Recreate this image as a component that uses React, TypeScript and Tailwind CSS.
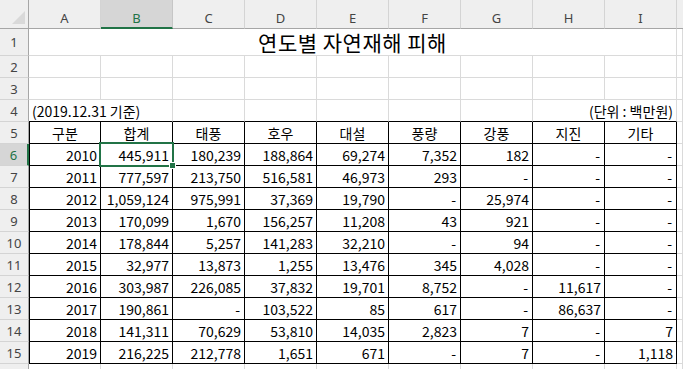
import React from "react";

const COLS = ["A", "B", "C", "D", "E", "F", "G", "H", "I"];
const HEAD = ["구분", "합계", "태풍", "호우", "대설", "풍량", "강풍", "지진", "기타"];
const DATA: string[][] = [
  ["2010", "445,911", "180,239", "188,864", "69,274", "7,352", "182", "-", "-"],
  ["2011", "777,597", "213,750", "516,581", "46,973", "293", "-", "-", "-"],
  ["2012", "1,059,124", "975,991", "37,369", "19,790", "-", "25,974", "-", "-"],
  ["2013", "170,099", "1,670", "156,257", "11,208", "43", "921", "-", "-"],
  ["2014", "178,844", "5,257", "141,283", "32,210", "-", "94", "-", "-"],
  ["2015", "32,977", "13,873", "1,255", "13,476", "345", "4,028", "-", "-"],
  ["2016", "303,987", "226,085", "37,832", "19,701", "8,752", "-", "11,617", "-"],
  ["2017", "190,861", "-", "103,522", "85", "617", "-", "86,637", "-"],
  ["2018", "141,311", "70,629", "53,810", "14,035", "2,823", "7", "-", "7"],
  ["2019", "216,225", "212,778", "1,651", "671", "-", "7", "-", "1,118"],
];

function RowHead({ n, label = true }: { n: number; label?: boolean }) {
  const sel = n === 6;
  return (
    <div
      className={
        sel
          ? "flex items-center justify-center bg-[#d6d6d6] border-r-2 border-r-[#217346] border-b border-b-[#d4d4d4] text-[#217346] text-[13px] font-['Noto_Sans',sans-serif]"
          : "flex items-center justify-center bg-[#efefef] border-r border-r-[#a6a6a6] border-b border-b-[#d4d4d4] text-[#444444] text-[13px] font-['Noto_Sans',sans-serif]"
      }
    >
      {label ? n : null}
    </div>
  );
}

function Light({ children }: { children?: React.ReactNode }) {
  return <div className="border-r border-b border-[#dadada]">{children}</div>;
}

export default function App() {
  const rows: React.ReactNode[] = [];

  // column header row
  rows.push(
    <div key="corner" className="relative bg-[#efefef] border-r border-b border-[#a6a6a6]">
      <svg className="absolute left-0 top-0" width="28" height="28" viewBox="0 0 28 28">
        <polygon points="25,11 25,24 12,24" fill="#d9d9d9" />
      </svg>
    </div>
  );
  COLS.forEach((c) => {
    rows.push(
      <div
        key={"h" + c}
        className={
          c === "B"
            ? "flex items-center justify-center pt-[8px] bg-[#d6d6d6] border-r border-r-[#c6c6c6] border-b-2 border-b-[#217346] text-[#217346] text-[13px] font-['Noto_Sans',sans-serif]"
            : "flex items-center justify-center pt-[8px] bg-[#efefef] border-r border-r-[#d4d4d4] border-b border-b-[#a6a6a6] text-[#444444] text-[13px] font-['Noto_Sans',sans-serif]"
        }
      >
        {c}
      </div>
    );
  });
  rows.push(<div key="hx" className="bg-[#efefef] border-b border-b-[#a6a6a6]" />);

  // row 1: title
  rows.push(<RowHead key="r1" n={1} />);
  rows.push(
    <div
      key="title"
      className="col-span-9 flex items-center justify-center border-r border-b border-[#dadada] text-[21px] text-black tracking-[0.5px]"
    >
      연도별 자연재해 피해
    </div>
  );
  rows.push(<Light key="r1x" />);

  // rows 2, 3
  [2, 3].forEach((r) => {
    rows.push(<RowHead key={"r" + r} n={r} />);
    for (let i = 0; i < 10; i++) rows.push(<Light key={"r" + r + "c" + i} />);
  });

  // row 4
  rows.push(<RowHead key="r4" n={4} />);
  rows.push(
    <div
      key="r4a"
      className="col-span-2 flex items-center pl-[3px] border-r border-r-[#dadada] border-b border-b-black text-[14px] text-black"
    >
      (2019.12.31 기준)
    </div>
  );
  for (let i = 0; i < 5; i++)
    rows.push(<div key={"r4c" + i} className="border-r border-r-[#dadada] border-b border-b-black" />);
  rows.push(
    <div
      key="r4h"
      className="col-span-2 flex items-center justify-end pr-[3px] border-r border-r-[#dadada] border-b border-b-black text-[14px] text-black"
    >
      (단위 : 백만원)
    </div>
  );
  rows.push(<Light key="r4x" />);

  // row 5: table header
  rows.push(<RowHead key="r5" n={5} />);
  HEAD.forEach((h, i) => {
    rows.push(
      <div
        key={"th" + i}
        className={
          i === 0
            ? "flex items-center justify-center border-l border-r border-b border-black text-[14px] text-black"
            : "flex items-center justify-center border-r border-b border-black text-[14px] text-black"
        }
      >
        {h}
      </div>
    );
  });
  rows.push(<Light key="r5x" />);

  // data rows
  DATA.forEach((row, ri) => {
    const n = ri + 6;
    rows.push(<RowHead key={"r" + n} n={n} />);
    row.forEach((v, ci) => {
      rows.push(
        <div
          key={"d" + n + "-" + ci}
          className={
            ci === 0
              ? "flex items-center justify-end pr-[3px] border-l border-r border-b border-black text-[14px] text-black"
              : v === "-"
              ? "flex items-center justify-end pr-[4px] border-r border-b border-black text-[14px] text-black"
              : "flex items-center justify-end pr-[3px] border-r border-b border-black text-[14px] text-black"
          }
        >
          {v}
        </div>
      );
    });
    rows.push(<Light key={"r" + n + "x"} />);
  });

  // row 16 partial (number falls below the visible edge)
  rows.push(<RowHead key="r16" n={16} label={false} />);
  for (let i = 0; i < 10; i++) rows.push(<Light key={"r16c" + i} />);

  return (
    <div className="relative w-[683px] h-[369px] overflow-hidden bg-white font-['Noto_Sans_CJK_KR',sans-serif] leading-[20px]">
      <div className="grid grid-cols-[29px_72px_72px_72px_72px_72px_72px_72px_72px_72px_1fr] grid-rows-[29px_27px_repeat(15,22px)]">
        {rows}
      </div>
      <div className="absolute left-[99px] top-[142px] w-[75px] h-[25px] border-2 border-[#217346]" />
      <div className="absolute left-[169px] top-[162px] w-[7px] h-[7px] bg-[#217346] border border-white" />
    </div>
  );
}
